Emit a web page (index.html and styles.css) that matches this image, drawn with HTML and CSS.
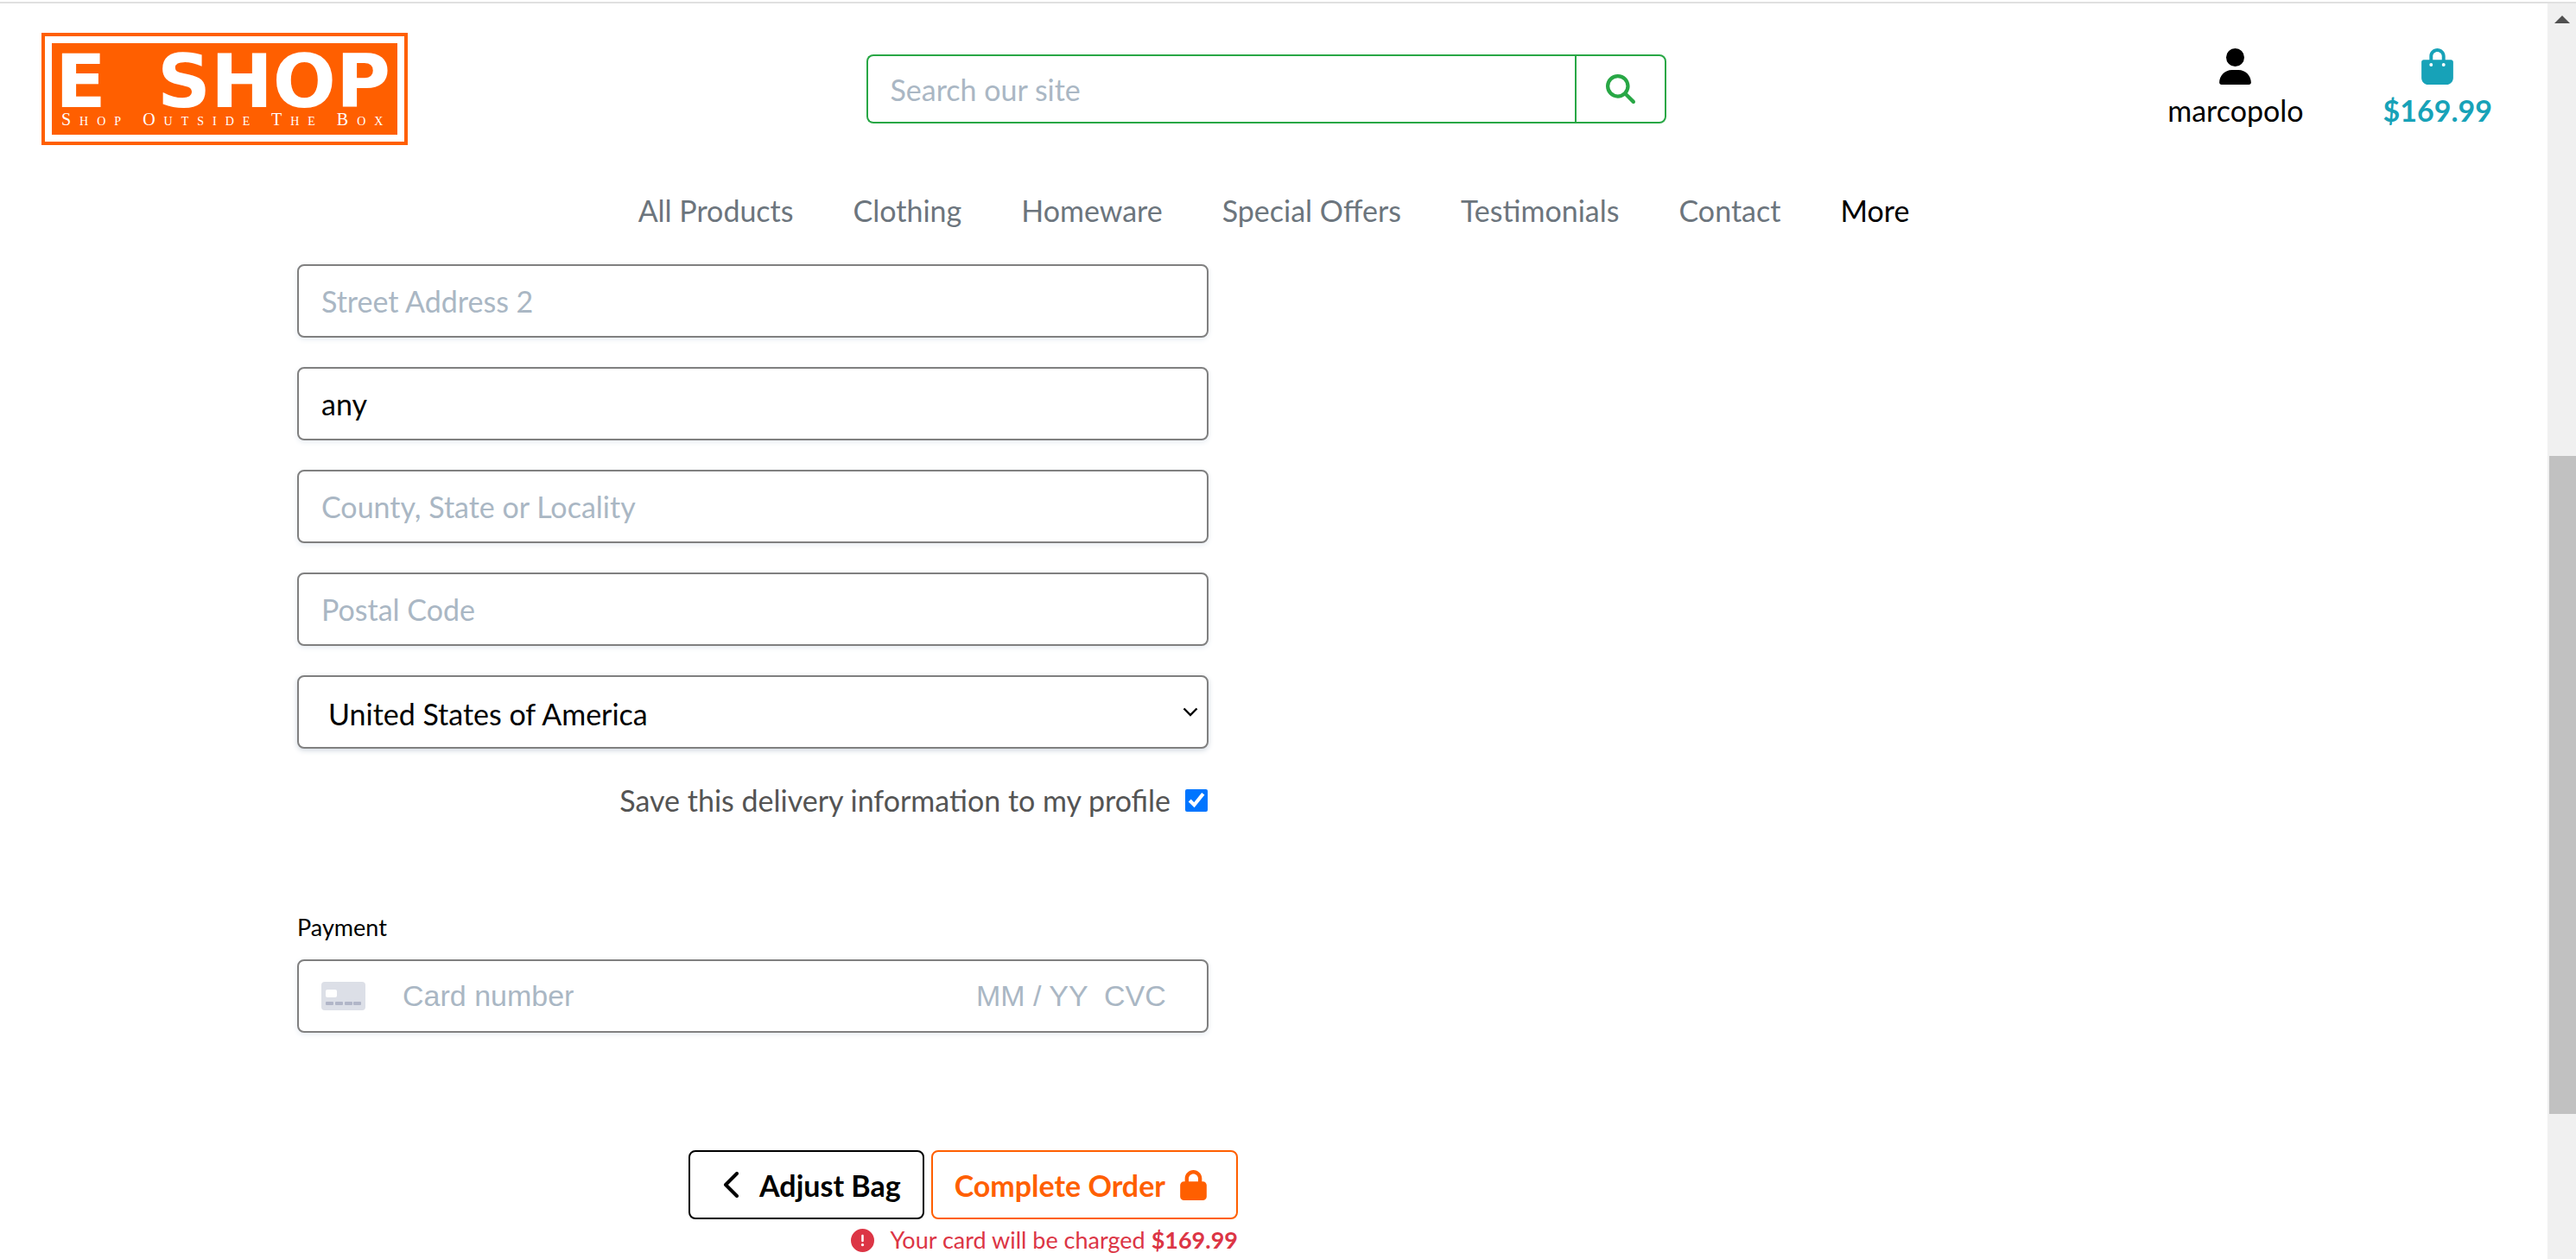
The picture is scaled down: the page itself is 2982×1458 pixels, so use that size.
FILE: index.html
```html
<!DOCTYPE html>
<html lang="en">
<head>
<meta charset="utf-8">
<title>E Shop - Checkout</title>
<link rel="stylesheet" href="styles.css">
</head>
<body>
<div class="window">
  <div class="page">
    <header class="header">
      <div class="topbar">
        <a class="logo" href="#" aria-label="E Shop home">
          <svg class="logo-art" viewBox="0 0 424 130">
            <rect x="2" y="2" width="420" height="126" fill="#fff" stroke="#ff5f00" stroke-width="4"/>
            <rect x="12" y="12" width="400" height="106" fill="#ff5f00"/>
            <text class="logo-name" x="16" y="86">E</text>
            <text class="logo-name" x="404" y="86" text-anchor="end">SHOP</text>
            <text class="logo-tag" x="23" y="107">Shop Outside The Box</text>
          </svg>
        </a>
        <form class="search" role="search">
          <input class="search-input" type="search" placeholder="Search our site" aria-label="Search our site">
          <button class="search-button" type="button" aria-label="Search">
            <svg class="icon" viewBox="0 0 512 512"><path fill="currentColor" d="M416 208c0 45.900-14.900 88.300-40 122.700L502.600 457.400c12.500 12.500 12.500 32.800 0 45.300s-32.800 12.500-45.300 0L330.700 376c-34.400 25.200-76.800 40-122.700 40C93.100 416 0 322.900 0 208S93.100 0 208 0S416 93.100 416 208zM208 352a144 144 0 1 0 0-288 144 144 0 1 0 0 288z"/></svg>
          </button>
        </form>
        <div class="account">
          <a class="account-link" href="#">
            <svg class="account-icon" viewBox="0 0 448 512"><path fill="currentColor" d="M224 256a128 128 0 1 0 0-256 128 128 0 1 0 0 256zm-45.700 48C79.800 304 0 383.800 0 482.300C0 498.700 13.300 512 29.700 512H418.300c16.400 0 29.700-13.300 29.700-29.700C448 383.800 368.200 304 269.700 304H178.300z"/></svg>
            <span>marcopolo</span>
          </a>
          <a class="account-link bag" href="#">
            <svg class="account-icon" viewBox="0 0 448 512"><path fill="currentColor" d="M112 112C112 50.100 162.100 0 224 0s112 50.100 112 112v48h80c17.700 0 32 14.300 32 32v224c0 53-43 96-96 96H96c-53 0-96-43-96-96V192c0-17.700 14.300-32 32-32h80v-48zm48 48h128v-48c0-35.300-28.700-64-64-64s-64 28.700-64 64v48zm-24 96a24 24 0 1 0 0-48 24 24 0 1 0 0 48zm200-24a24 24 0 1 0-48 0 24 24 0 1 0 48 0z"/></svg>
            <span>$169.99</span>
          </a>
        </div>
      </div>
      <nav class="nav">
        <a href="#">All Products</a>
        <a href="#">Clothing</a>
        <a href="#">Homeware</a>
        <a href="#">Special Offers</a>
        <a href="#">Testimonials</a>
        <a href="#">Contact</a>
        <a class="more" href="#">More</a>
      </nav>
    </header>

    <main class="checkout">
      <form class="form">
        <input class="field" type="text" placeholder="Street Address 2" aria-label="Street Address 2">
        <input class="field" type="text" value="any" aria-label="Town or City">
        <input class="field" type="text" placeholder="County, State or Locality" aria-label="County, State or Locality">
        <input class="field" type="text" placeholder="Postal Code" aria-label="Postal Code">
        <div class="select-wrap">
          <select class="field select" aria-label="Country"><option>United States of America</option></select>
          <svg class="chevron" viewBox="0 0 18 11"><path d="M1.500 1.500 9 9l7.500-7.500" fill="none" stroke="#000" stroke-width="2.400"/></svg>
        </div>
        <label class="save">Save this delivery information to my profile <input class="tick" type="checkbox" checked></label>
        <fieldset class="payment">
          <legend class="legend">Payment</legend>
          <div class="field card">
            <svg class="card-icon" viewBox="0 0 51 33"><rect width="51" height="33" rx="4" fill="#dcdfe7"/><rect x="5" y="9" width="13" height="9" rx="2" fill="#fff"/><g fill="#b1b6c8"><rect x="5" y="23" width="9" height="4" rx="1"/><rect x="16" y="23" width="9" height="4" rx="1"/><rect x="27" y="23" width="9" height="4" rx="1"/><rect x="37" y="23" width="9" height="4" rx="1"/></g></svg>
            <input class="card-input number" type="text" placeholder="Card number" aria-label="Card number">
            <input class="card-input expiry" type="text" placeholder="MM / YY" aria-label="Expiry date">
            <input class="card-input cvc" type="text" placeholder="CVC" aria-label="CVC">
          </div>
        </fieldset>
      </form>
      <div class="actions">
        <div class="buttons">
          <button class="btn back" type="button">
            <svg class="btn-chevron" viewBox="0 0 18 30"><path d="M16 2 3 15l13 13" fill="none" stroke="currentColor" stroke-width="4" stroke-linecap="round" stroke-linejoin="round"/></svg>
            Adjust Bag
          </button>
          <button class="btn complete" type="button">
            Complete Order
            <svg class="btn-lock" viewBox="0 0 448 512"><path fill="currentColor" d="M144 144v48H304V144c0-44.200-35.800-80-80-80s-80 35.800-80 80zM80 192V144C80 64.500 144.500 0 224 0s144 64.500 144 144v48h16c35.300 0 64 28.700 64 64V448c0 35.300-28.700 64-64 64H64c-35.300 0-64-28.700-64-64V256c0-35.300 28.700-64 64-64H80z"/></svg>
          </button>
        </div>
        <p class="notice">
          <svg class="notice-icon" viewBox="0 0 512 512"><path fill="currentColor" d="M256 512A256 256 0 1 0 256 0a256 256 0 1 0 0 512zm0-384c13.300 0 24 10.700 24 24V264c0 13.300-10.700 24-24 24s-24-10.700-24-24V152c0-13.300 10.700-24 24-24zM224 352a32 32 0 1 1 64 0 32 32 0 1 1-64 0z"/></svg>
          <span>Your card will be charged <strong>$169.99</strong></span>
        </p>
      </div>
    </main>
  </div>
  <div class="scrollbar" aria-hidden="true">
    <svg class="arrow" viewBox="0 0 18 9"><path d="M9 0 18 9H0z" fill="#505050"/></svg>
    <div class="track"><div class="thumb"></div></div>
  </div>
</div>
</body>
</html>
```

FILE: styles.css
```css
* { box-sizing: border-box; }

body {
  margin: 0;
  background: #fff;
  color: #000;
  font: 34px/51px Lato, "Liberation Sans", sans-serif;
}

a { color: inherit; text-decoration: none; }
input, select, button { font: inherit; color: inherit; margin: 0; }
::placeholder { color: #aab7c4; opacity: 1; }
svg { display: block; flex: none; }

.window {
  display: flex;
  height: 100vh;
  overflow: hidden;
  border-top: 2px solid #fff;
  box-shadow: inset 0 2px #e0e0e0;
}
.page { flex: 1; min-width: 0; padding-top: 2px; }

/* Header */
.topbar {
  display: grid;
  grid-template-columns: 1fr 926px 1fr;
  align-items: start;
  padding: 34px 64px 0 46px;
  height: 202px;
}
.logo { width: 426px; padding-left: 2px; }
.logo-art { width: 100%; }
.logo-name { font: bold 86px/1 "DejaVu Sans", sans-serif; fill: #fff; }
.logo-tag {
  font: 20px/1 "Liberation Serif", serif;
  font-variant: small-caps;
  letter-spacing: 10px;
  fill: #fff;
}
.search { display: flex; margin-top: 25px; height: 80px; }
.search-input {
  flex: 1;
  min-width: 0;
  padding: 0 26px;
  border: 2px solid #28a745;
  border-right: 0;
  border-radius: 8px 0 0 8px;
  background: #fff;
  outline: 0;
  appearance: none;
}
.search-button {
  display: flex;
  align-items: center;
  justify-content: center;
  width: 106px;
  padding: 0;
  border: 2px solid #28a745;
  border-radius: 0 8px 8px 0;
  background: #fff;
  color: #28a745;
}
.icon { width: 34px; height: 34px; }
.account { display: flex; justify-content: flex-end; gap: 92px; padding-top: 18px; }
.account-link { display: flex; flex-direction: column; align-items: center; }
.account-icon { width: 37px; height: 42px; margin-bottom: 4px; }
.bag { color: #17a2b8; font-weight: 700; }

.nav {
  display: flex;
  justify-content: center;
  gap: 69px;
  padding: 12px 0 37px;
  color: #6c757d;
}
.more { color: #000; }

/* Checkout form */
.checkout { width: 1089px; margin-left: 344px; }
.form { display: flex; flex-direction: column; gap: 34px; width: 1055px; }
.field {
  display: block;
  width: 100%;
  height: 85px;
  padding: 0 26px;
  border: 2px solid #808080;
  border-radius: 8px;
  background: #fff;
  box-shadow: 0 2px 6px #e6ebf1;
  outline: 0;
}
.select-wrap { position: relative; }
.select { appearance: none; padding: 4px 34px 0; box-shadow: 0 2px 6px #cfd7df; }
.chevron { position: absolute; right: 12px; top: 37px; width: 18px; height: 11px; }
.save {
  display: flex;
  align-items: center;
  justify-content: flex-end;
  gap: 17px;
  padding-right: 1px;
  color: #545454;
}
.tick { width: 26px; height: 26px; accent-color: #0075ff; }
.payment { margin: 68px 0 0; padding: 0; border: 0; min-width: 0; }
.legend { padding: 0; margin-bottom: 17px; font-size: 27px; line-height: 40px; }
.card { display: flex; align-items: center; font-family: "Liberation Sans", Arial, sans-serif; }
.card-icon { width: 51px; height: 33px; margin-right: 43px; }
.card-input { padding: 0; border: 0; background: none; outline: 0; min-width: 0; }
.number { flex: 1; }
.expiry { width: 148px; }
.cvc { width: 93px; }

.actions { padding-top: 136px; }
.buttons { display: flex; justify-content: flex-end; gap: 8px; }
.btn {
  display: flex;
  align-items: center;
  height: 80px;
  padding: 0 25px;
  border: 2px solid currentColor;
  border-radius: 8px;
  background: #fff;
  font-weight: 700;
}
.back { padding-left: 38px; gap: 24px; }
.complete { padding-right: 34px; gap: 17px; color: #ff5f00; }
.btn-chevron { width: 18px; height: 30px; }
.btn-lock { width: 31px; height: 35px; }
.notice {
  display: flex;
  align-items: center;
  justify-content: flex-end;
  gap: 18px;
  margin: 4px 0 0;
  color: #dc3545;
  font-size: 27px;
  line-height: 40px;
}
.notice-icon { width: 27px; height: 27px; }

/* Window scrollbar */
.scrollbar {
  display: flex;
  flex-direction: column;
  align-items: center;
  width: 33px;
  margin-top: 2px;
  padding: 14px 0 36px;
  background: #f0f0f0;
}
.arrow { width: 18px; height: 9px; margin-bottom: 9px; }
.track { flex: 1; width: 100%; padding-left: 2px; display: flex; flex-direction: column; }
.track::before { content: ""; flex: 492; }
.track::after { content: ""; flex: 132; }
.thumb { flex: 762; background: #c1c1c1; }
```
